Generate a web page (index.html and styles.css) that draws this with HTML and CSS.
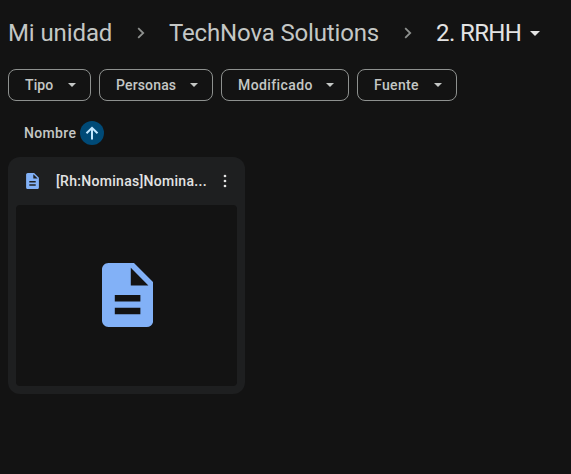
FILE: index.html
```
<!DOCTYPE html>
<html lang="es">
<head>
<meta charset="utf-8">
<title>2. RRHH</title>
<link rel="stylesheet" href="styles.css">
</head>
<body>
<nav class="crumbs">
  <span class="crumb root">Mi unidad</span>
  <svg class="chevron" viewBox="0 0 8 12"><path d="M1.2 1.2 6.2 6l-5 4.8"/></svg>
  <span class="crumb company">TechNova Solutions</span>
  <svg class="chevron" viewBox="0 0 8 12"><path d="M1.2 1.2 6.2 6l-5 4.8"/></svg>
  <span class="crumb current">2. RRHH</span>
  <svg class="caret-large" viewBox="0 0 10 5"><path d="M0 0h10L5 5z"/></svg>
</nav>
<div class="filters">
  <button class="chip type"><span>Tipo</span><svg class="caret" viewBox="0 0 8 4"><path d="M0 0h8L4 4z"/></svg></button>
  <button class="chip people"><span>Personas</span><svg class="caret" viewBox="0 0 8 4"><path d="M0 0h8L4 4z"/></svg></button>
  <button class="chip modified"><span>Modificado</span><svg class="caret" viewBox="0 0 8 4"><path d="M0 0h8L4 4z"/></svg></button>
  <button class="chip source"><span>Fuente</span><svg class="caret" viewBox="0 0 8 4"><path d="M0 0h8L4 4z"/></svg></button>
</div>
<div class="sort">
  <span class="sort-label">Nombre</span>
  <span class="sort-arrow"><svg viewBox="0 0 14 14"><path d="M7 13.5V2M1.5 7.3 7 1.8l5.5 5.5"/></svg></span>
</div>
<article class="card">
  <header class="card-head">
    <svg class="doc-small" viewBox="4 2 16 20"><path fill-rule="evenodd" d="M14 2H6c-1.1 0-2 .9-2 2v16c0 1.1.9 2 2 2h12c1.1 0 2-.9 2-2V8l-6-6zm2 16H8v-2h8v2zm0-4H8v-2h8v2zm-3-5V3.5L18.5 9H13z"/></svg>
    <span class="file-name">[Rh:Nominas]Nomina...</span>
    <svg class="more" viewBox="0 0 4 14"><circle cx="2" cy="2" r="1.35"/><circle cx="2" cy="7" r="1.35"/><circle cx="2" cy="12" r="1.35"/></svg>
  </header>
  <div class="preview">
    <svg class="doc-large" viewBox="4 2 16 20"><path fill-rule="evenodd" d="M14 2H6c-1.1 0-2 .9-2 2v16c0 1.1.9 2 2 2h12c1.1 0 2-.9 2-2V8l-6-6zm2 16H8v-2h8v2zm0-4H8v-2h8v2zm-3-5V3.5L18.5 9H13z"/></svg>
  </div>
</article>
</body>
</html>
```
FILE: styles.css
```
* { box-sizing: border-box; }
body {
  margin: 0;
  height: 474px;
  padding: 0 8px;
  background: #131313;
  color: #c4c7c5;
  font-family: Roboto, "Liberation Sans", sans-serif;
  overflow: hidden;
}
svg { display: block; flex: none; }
.crumbs { display: flex; align-items: center; height: 66px; white-space: nowrap; }
.crumb { flex: none; font-size: 24px; line-height: 32px; }
.root { width: 104px; letter-spacing: -0.1px; }
.company { width: 211px; letter-spacing: -0.15px; }
.current { width: 86px; color: #e3e3e3; letter-spacing: -0.6px; }
.chevron { width: 8px; height: 12px; margin: 0 24px 0 25px; fill: none; stroke: #8e918f; stroke-width: 1.8; }
.company + .chevron { margin: 0 24px 0 24px; }
.caret-large { width: 10px; height: 5px; margin-left: 8px; fill: #e3e3e3; }
.filters { display: flex; gap: 8px; margin-top: 3px; }
.chip {
  display: flex; align-items: center; justify-content: space-between;
  height: 32px; padding: 0 14px 0 16px;
  border: 1px solid #8e918f; border-radius: 8px; background: none;
  color: #c4c7c5; font: 500 14px/20px Roboto, sans-serif; white-space: nowrap;
}
.type { width: 83px; letter-spacing: 0.1px; }
.people { width: 114px; letter-spacing: 0.15px; }
.modified { width: 128px; letter-spacing: 0.4px; }
.source { width: 100px; letter-spacing: 0.35px; }
.caret { width: 8px; height: 4px; fill: #c4c7c5; }
.sort { display: flex; align-items: center; height: 24px; margin: 20px 0 0 16px; }
.sort-label { width: 56px; font-size: 14px; font-weight: 500; line-height: 20px; letter-spacing: 0.35px; }
.sort-arrow { display: grid; place-items: center; width: 24px; height: 24px; border-radius: 50%; background: #004a77; }
.sort-arrow svg { width: 14px; height: 14px; fill: none; stroke: #c2e7ff; stroke-width: 2; }
.card { width: 237px; height: 237px; margin-top: 12px; padding: 0 8px 8px; border-radius: 12px; background: #1e1f20; }
.card-head { display: flex; align-items: center; height: 48px; padding-left: 10px; }
.doc-small { width: 13px; height: 16px; fill: #82b1f7; }
.file-name { width: 151px; margin-left: 17px; color: #e3e3e3; font-size: 14px; font-weight: 500; line-height: 20px; letter-spacing: 0.29px; white-space: nowrap; }
.more { width: 4px; height: 14px; margin-left: 16px; fill: #e3e3e3; }
.preview { display: grid; place-items: center; height: 181px; padding: 0 0 1px 2px; border-radius: 4px; background: #131313; }
.doc-large { width: 51.2px; height: 64px; fill: #82b1f7; }
```
